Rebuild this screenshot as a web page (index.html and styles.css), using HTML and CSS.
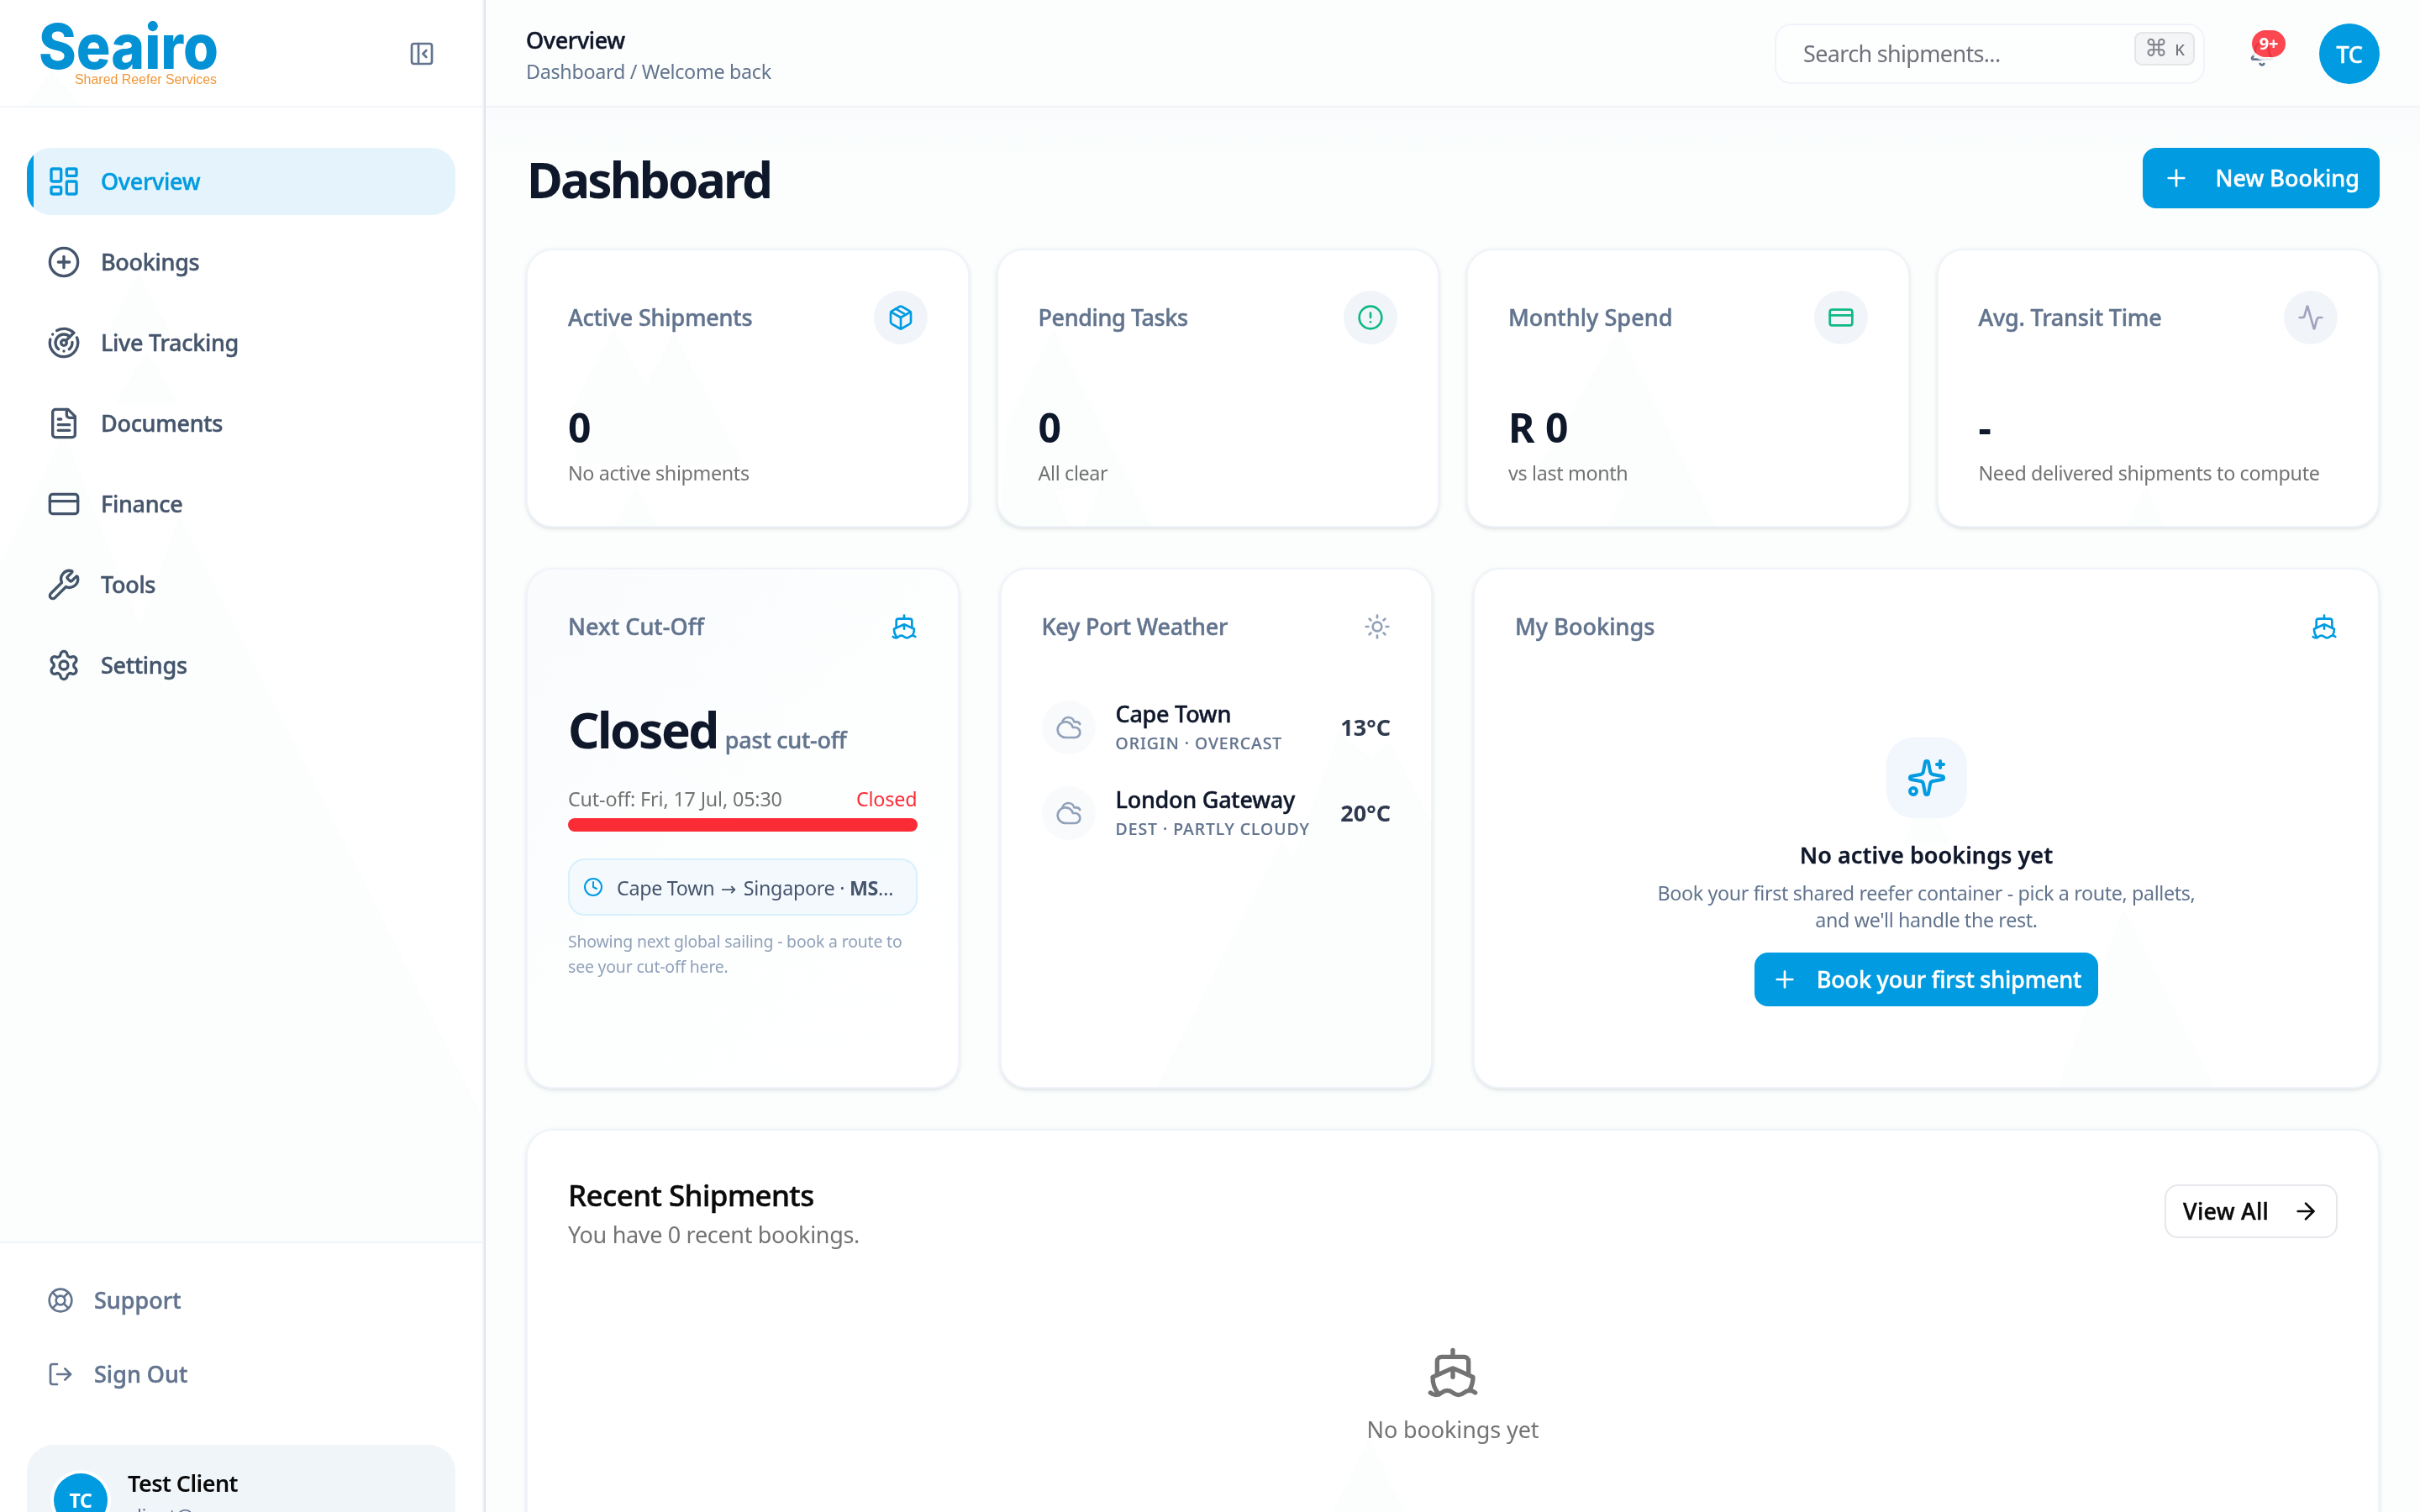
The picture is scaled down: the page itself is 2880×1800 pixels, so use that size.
FILE: index.html
```html
<!DOCTYPE html>
<html lang="en">
<head>
<meta charset="utf-8">
<title>Seairo Dashboard</title>
<link rel="stylesheet" href="styles.css">
</head>
<body>
<svg class="defs" aria-hidden="true">
  <symbol id="ship" viewBox="0 0 24 24"><path d="M12 10.189V14"/><path d="M12 2v3"/><path d="M19 13V7a2 2 0 0 0-2-2H7a2 2 0 0 0-2 2v6"/><path d="M19.38 20A11.6 11.6 0 0 0 21 14l-8.188-3.639a2 2 0 0 0-1.624 0L3 14a11.6 11.6 0 0 0 2.81 7.76"/><path d="M2 21c.6.5 1.2 1 2.5 1 2.5 0 2.5-2 5-2 1.3 0 1.9.5 2.5 1s1.2 1 2.5 1c2.5 0 2.5-2 5-2 1.3 0 1.9.5 2.5 1"/></symbol>
  <symbol id="card" viewBox="0 0 24 24"><rect width="20" height="14" x="2" y="5" rx="2"/><path d="M2 10h20"/></symbol>
  <symbol id="plus" viewBox="0 0 24 24"><path d="M5 12h14"/><path d="M12 5v14"/></symbol>
  <symbol id="cloudy" viewBox="0 0 24 24"><path d="M17.5 12a1 1 0 1 1 0 9H9.006a7 7 0 1 1 6.702-9z"/><path d="M21.832 9A3 3 0 0 0 19 7h-2.207a5.5 5.5 0 0 0-10.72.61"/></symbol>
</svg>

<div class="app">
  <aside class="sidebar">
    <div class="brand">
      <svg class="logo" width="212" height="84" viewBox="0 0 212 84" role="img" aria-label="Seairo Shared Reefer Services">
        <text class="logo-name" x="-2" y="61" textLength="214" lengthAdjust="spacingAndGlyphs">Seairo</text>
        <text class="logo-tag" x="41" y="79" textLength="169" lengthAdjust="spacingAndGlyphs">Shared Reefer Services</text>
      </svg>
      <svg class="ic s32 collapse" viewBox="0 0 24 24"><rect width="18" height="18" x="3" y="3" rx="2"/><path d="M9 3v18"/><path d="m16 15-3-3 3-3"/></svg>
    </div>
    <nav class="nav">
      <a class="item active"><svg class="ic s40" viewBox="0 0 24 24"><rect width="7" height="9" x="3" y="3" rx="1"/><rect width="7" height="5" x="14" y="3" rx="1"/><rect width="7" height="9" x="14" y="12" rx="1"/><rect width="7" height="5" x="3" y="16" rx="1"/></svg><span>Overview</span></a>
      <a class="item"><svg class="ic s40" viewBox="0 0 24 24"><circle cx="12" cy="12" r="10"/><path d="M8 12h8"/><path d="M12 8v8"/></svg><span>Bookings</span></a>
      <a class="item"><svg class="ic s40" viewBox="0 0 24 24"><path d="M19.07 4.93A10 10 0 0 0 6.99 3.34"/><path d="M4 6h.01"/><path d="M2.29 9.62A10 10 0 1 0 21.31 8.35"/><path d="M16.24 7.76A6 6 0 1 0 8.23 16.67"/><path d="M12 18h.01"/><path d="M17.99 11.66A6 6 0 0 1 15.77 16.67"/><circle cx="12" cy="12" r="2"/><path d="m13.41 10.59 5.66-5.66"/></svg><span>Live Tracking</span></a>
      <a class="item"><svg class="ic s40" viewBox="0 0 24 24"><path d="M15 2H6a2 2 0 0 0-2 2v16a2 2 0 0 0 2 2h12a2 2 0 0 0 2-2V7Z"/><path d="M14 2v4a2 2 0 0 0 2 2h4"/><path d="M10 9H8"/><path d="M16 13H8"/><path d="M16 17H8"/></svg><span>Documents</span></a>
      <a class="item"><svg class="ic s40"><use href="#card"/></svg><span>Finance</span></a>
      <a class="item"><svg class="ic s40" viewBox="0 0 24 24"><path d="M14.7 6.3a1 1 0 0 0 0 1.4l1.6 1.6a1 1 0 0 0 1.4 0l3.106-3.105c.32-.322.863-.22.983.218a6 6 0 0 1-8.259 7.057l-7.91 7.91a1 1 0 0 1-2.999-3l7.91-7.91a6 6 0 0 1 7.057-8.259c.438.12.54.662.219.984z"/></svg><span>Tools</span></a>
      <a class="item"><svg class="ic s40" viewBox="0 0 24 24"><path d="M9.671 4.136a2.34 2.34 0 0 1 4.659 0 2.34 2.34 0 0 0 3.319 1.915 2.34 2.34 0 0 1 2.33 4.033 2.34 2.34 0 0 0 0 3.831 2.34 2.34 0 0 1-2.33 4.033 2.34 2.34 0 0 0-3.319 1.915 2.34 2.34 0 0 1-4.659 0 2.34 2.34 0 0 0-3.32-1.915 2.34 2.34 0 0 1-2.33-4.033 2.34 2.34 0 0 0 0-3.831A2.34 2.34 0 0 1 6.35 6.051a2.34 2.34 0 0 0 3.319-1.915"/><circle cx="12" cy="12" r="3"/></svg><span>Settings</span></a>
    </nav>
    <div class="side-foot">
      <a class="foot-link"><svg class="ic s32" viewBox="0 0 24 24"><circle cx="12" cy="12" r="10"/><path d="m4.93 4.93 4.24 4.24"/><path d="m14.83 9.17 4.24-4.24"/><path d="m14.83 14.83 4.24 4.24"/><path d="m9.17 14.83-4.24 4.24"/><circle cx="12" cy="12" r="4"/></svg><span>Support</span></a>
      <a class="foot-link"><svg class="ic s32" viewBox="0 0 24 24"><path d="m16 17 5-5-5-5"/><path d="M21 12H9"/><path d="M9 21H5a2 2 0 0 1-2-2V5a2 2 0 0 1 2-2h4"/></svg><span>Sign Out</span></a>
      <div class="profile">
        <div class="avatar small">TC</div>
        <div><div class="p-name">Test Client</div><div class="p-mail">client@</div></div>
      </div>
    </div>
  </aside>

  <div class="main">
    <header class="topbar">
      <div class="crumbs">
        <div class="crumb-title">Overview</div>
        <div class="crumb-path">Dashboard / Welcome back</div>
      </div>
      <div class="top-right">
        <div class="search"><span>Search shipments...</span><kbd class="kbd"><span class="cmd">⌘</span><span>K</span></kbd></div>
        <div class="bell">
          <svg class="ic s32" viewBox="0 0 24 24"><path d="M10.268 21a2 2 0 0 0 3.464 0"/><path d="M3.262 15.326A1 1 0 0 0 4 17h16a1 1 0 0 0 .74-1.673C19.41 13.956 18 12.499 18 8A6 6 0 0 0 6 8c0 4.499-1.411 5.956-2.738 7.326"/></svg>
          <span class="badge">9+</span>
        </div>
        <div class="avatar">TC</div>
      </div>
    </header>

    <main class="content">
      <div class="page-head">
        <h1>Dashboard</h1>
        <button class="btn lg"><svg class="ic s32"><use href="#plus"/></svg><span>New Booking</span></button>
      </div>

      <section class="stats">
        <article class="card stat">
          <div class="stat-head"><h2 class="label">Active Shipments</h2><div class="bubble blue"><svg class="ic s32" viewBox="0 0 24 24"><path d="M11 21.73a2 2 0 0 0 2 0l7-4A2 2 0 0 0 21 16V8a2 2 0 0 0-1-1.73l-7-4a2 2 0 0 0-2 0l-7 4A2 2 0 0 0 3 8v8a2 2 0 0 0 1 1.73z"/><path d="M12 22V12"/><path d="M3.29 7 12 12l8.71-5"/><path d="m7.5 4.27 9 5.15"/></svg></div></div>
          <div class="value">0</div><div class="note">No active shipments</div>
        </article>
        <article class="card stat">
          <div class="stat-head"><h2 class="label tight">Pending Tasks</h2><div class="bubble green"><svg class="ic s32" viewBox="0 0 24 24"><circle cx="12" cy="12" r="10"/><path d="M12 8v4"/><path d="M12 16h.01"/></svg></div></div>
          <div class="value">0</div><div class="note">All clear</div>
        </article>
        <article class="card stat">
          <div class="stat-head"><h2 class="label wide">Monthly Spend</h2><div class="bubble green"><svg class="ic s32"><use href="#card"/></svg></div></div>
          <div class="value">R 0</div><div class="note">vs last month</div>
        </article>
        <article class="card stat">
          <div class="stat-head"><h2 class="label">Avg. Transit Time</h2><div class="bubble mute"><svg class="ic s32" viewBox="0 0 24 24"><path d="M22 12h-2.48a2 2 0 0 0-1.93 1.46l-2.35 8.36a.25.25 0 0 1-.48 0L9.24 2.18a.25.25 0 0 0-.48 0l-2.35 8.36A2 2 0 0 1 4.49 12H2"/></svg></div></div>
          <div class="value">-</div><div class="note">Need delivered shipments to compute</div>
        </article>
      </section>

      <section class="panels">
        <article class="card panel cutoff">
          <div class="panel-head"><h2 class="label wide">Next Cut-Off</h2><svg class="ic s32 c-blue"><use href="#ship"/></svg></div>
          <div class="closed"><span class="closed-big">Closed</span><span class="closed-sub">past cut-off</span></div>
          <div class="cut-row"><span class="cut-date">Cut-off: Fri, 17 Jul, 05:30</span><span class="cut-state">Closed</span></div>
          <div class="bar"></div>
          <div class="sailing"><svg class="ic s24 c-blue" viewBox="0 0 24 24"><circle cx="12" cy="12" r="10"/><path d="M12 6v6l4 2"/></svg><span class="route">Cape Town <span class="arrow">→</span> Singapore · <b>MS</b>…</span></div>
          <p class="hint">Showing next global sailing - book a route to<br>see your cut-off here.</p>
        </article>

        <article class="card panel">
          <div class="panel-head"><h2 class="label">Key Port Weather</h2><svg class="ic s32 c-slate" viewBox="0 0 24 24"><circle cx="12" cy="12" r="4"/><path d="M12 2v2"/><path d="M12 20v2"/><path d="m4.93 4.93 1.41 1.41"/><path d="m17.66 17.66 1.41 1.41"/><path d="M2 12h2"/><path d="M20 12h2"/><path d="m6.34 17.66-1.41 1.41"/><path d="m19.07 4.93-1.41 1.41"/></svg></div>
          <div class="ports">
            <div class="port"><div class="bubble pale"><svg class="ic s32"><use href="#cloudy"/></svg></div><div class="port-text"><div class="port-name">Cape Town</div><div class="port-sub">Origin · Overcast</div></div><div class="temp">13°C</div></div>
            <div class="port"><div class="bubble pale"><svg class="ic s32"><use href="#cloudy"/></svg></div><div class="port-text"><div class="port-name">London Gateway</div><div class="port-sub">Dest · Partly Cloudy</div></div><div class="temp">20°C</div></div>
          </div>
        </article>

        <article class="card panel span2">
          <div class="panel-head"><h2 class="label wide">My Bookings</h2><svg class="ic s32 c-blue"><use href="#ship"/></svg></div>
          <div class="empty">
            <div class="tile"><svg class="ic s48" viewBox="0 0 24 24"><path d="M11.017 2.814a1 1 0 0 1 1.966 0l1.051 5.558a2 2 0 0 0 1.594 1.594l5.558 1.051a1 1 0 0 1 0 1.966l-5.558 1.051a2 2 0 0 0-1.594 1.594l-1.051 5.558a1 1 0 0 1-1.966 0l-1.051-5.558a2 2 0 0 0-1.594-1.594l-5.558-1.051a1 1 0 0 1 0-1.966l5.558-1.051a2 2 0 0 0 1.594-1.594z"/><path d="M20 2v4"/><path d="M22 4h-4"/><circle cx="4" cy="20" r="2"/></svg></div>
            <h3>No active bookings yet</h3>
            <p>Book your first shared reefer container - pick a route, pallets,<br>and we'll handle the rest.</p>
            <button class="btn"><svg class="ic s32"><use href="#plus"/></svg><span>Book your first shipment</span></button>
          </div>
        </article>
      </section>

      <section class="card recent">
        <div class="recent-head">
          <div><h2>Recent Shipments</h2><p>You have 0 recent bookings.</p></div>
          <button class="btn outline"><span>View All</span><svg class="ic s32" viewBox="0 0 24 24"><path d="M5 12h14"/><path d="m12 5 7 7-7 7"/></svg></button>
        </div>
        <div class="recent-empty"><svg class="ic s64"><use href="#ship"/></svg><p>No bookings yet</p></div>
      </section>
    </main>
  </div>

  <svg class="peaks" width="2880" height="1800" viewBox="0 0 2880 1800" aria-hidden="true">
    <path d="M61 83 31 126H97ZM165 325 125 400H205ZM174 417 138 480H212ZM0 672 76 515 166 745 214 613 574 1330V1478H0Z"/>
    <path d="M731 390 769 460 802 395 884 552H686L681 485ZM756 577 731 626H782ZM1254 392 1198 505 1190 626H1274L1255 585 1310 573 1291 626H1371ZM1926 393 1831 557 1935 580 1912 626H2042ZM2554 578 2530 626H2576Z"/>
    <path d="M1376 1294 1525 1001 1539 1022 1594 870 1633 904 1654 883 1704 980V1294ZM2527 1081 2449 1294H2636ZM2278 974H2306L2322 1005H2265ZM1629 1713 1586 1800H1672Z"/>
  </svg>
</div>
</body>
</html>
```
FILE: styles.css
```css
* { box-sizing: border-box; margin: 0; padding: 0; }
html, body { height: 1800px; overflow: hidden; }
body {
  font-family: "Noto Sans", "Open Sans", sans-serif;
  font-size: 27px;
  letter-spacing: -0.3px;
  color: #0a0a0a;
  background: #fff;
}
button { font: inherit; letter-spacing: inherit; border: 0; }
.defs { display: none; }

.ic { fill: none; stroke: currentColor; stroke-width: 2; stroke-linecap: round; stroke-linejoin: round; flex: none; display: block; }
.s24 { width: 24px; height: 24px; }
.s32 { width: 32px; height: 32px; }
.s40 { width: 40px; height: 40px; }
.s48 { width: 48px; height: 48px; }
.s64 { width: 64px; height: 64px; }
.c-blue { color: #009be0; }
.c-slate { color: #90a1b9; }

/* Slightly heavier medium weight */
.item, .foot-link, .avatar, .crumb-title, .btn, .label, .closed-sub, .port-name, .port-sub, .recent h2 { -webkit-text-stroke: 0.45px currentColor; }

.app { display: grid; grid-template-columns: 578px 1fr; height: 1800px; overflow: hidden; position: relative; }
.peaks { position: absolute; left: 0; top: 0; pointer-events: none; fill: #fbfefd; mix-blend-mode: multiply; }

/* Sidebar */
.sidebar { display: grid; grid-template-rows: 128px 1350px auto; height: 1800px; overflow: hidden; border-right: 2px solid #e1e4ea; box-shadow: inset -2px 0 0 #f1f4f9; padding-right: 2px; }
.brand { display: flex; justify-content: space-between; align-items: center; padding: 0 56px 0 48px; border-bottom: 2px solid #f1f4f9; }
.collapse { color: #62748e; margin-top: 2px; }
.logo { overflow: visible; }
.logo-name { font: 800 74px Inter, sans-serif; fill: #0492d5; letter-spacing: 0; }
.logo-tag { font: 16px "Liberation Sans", sans-serif; fill: #f0983a; letter-spacing: 0; }
.nav { display: flex; flex-direction: column; gap: 16px; padding: 48px 32px 0; }
.item { display: flex; align-items: center; gap: 24px; height: 80px; padding: 0 24px; border-radius: 28px; color: #45556c; font-weight: 500; letter-spacing: -0.3px; overflow: hidden; }
.item span, .foot-link span { padding-bottom: 2px; }
.item.active { background: linear-gradient(90deg, #009be0 8px, #e5f4fc 8px); color: #009be0; }
.side-foot { border-top: 2px solid #f1f4f9; padding: 32px 32px 0; }
.foot-link { display: flex; align-items: center; gap: 24px; height: 72px; padding: 0 24px; margin-bottom: 16px; color: #62748e; font-weight: 500; letter-spacing: 0; }
.profile { display: flex; gap: 24px; height: 140px; padding: 26px 32px; border-radius: 32px; background: #f0f5fa; }
.foot-link + .profile { margin-top: 48px; }
.p-name { font-weight: 600; font-size: 27px; line-height: 40px; letter-spacing: -0.55px; }
.p-mail { font-size: 23.3px; line-height: 32px; margin-top: 3px; color: #62748e; }

.avatar { width: 72px; height: 72px; border-radius: 50%; background: #009be0; color: #fff; font-weight: 500; display: flex; align-items: center; justify-content: center; }
.avatar.small { width: 64px; height: 64px; margin-top: 8px; font-size: 23px; font-weight: 700; box-shadow: 0 0 0 4px #fff; -webkit-text-stroke: 0; }

/* Top bar */
.main { background: #fbfefd; }
.topbar { height: 128px; border-bottom: 2px solid #f0f3f9; display: flex; justify-content: space-between; padding: 28px 48px 0; background: #fcfefd; }
.crumb-title { font-weight: 500; letter-spacing: -0.35px; line-height: 40px; color: #0f172b; }
.crumb-path { font-size: 23.3px; line-height: 34px; color: #62748e; }
.top-right { display: flex; align-items: flex-start; }
.search { position: relative; width: 512px; height: 72px; border: 2px solid #f1f3fa; border-radius: 20px; padding-left: 32px; line-height: 67px; color: #71717b; letter-spacing: -0.67px; background: #fdfefe; }
.kbd { position: absolute; right: 10px; top: 8px; width: 72px; height: 40px; border: 2px solid #e4e5e7; border-radius: 9px; background: #f4f5f7; display: flex; align-items: center; justify-content: center; gap: 8px; font: 500 18.5px "Noto Sans", sans-serif; letter-spacing: 0; }
.cmd { font: 28px/32px "DejaVu Sans", sans-serif; color: #85858e; }
.bell { position: relative; width: 72px; height: 72px; margin: 0 32px; padding: 20px; color: #62748e; }
.badge { position: absolute; left: 24px; top: 8px; width: 40px; height: 32px; border-radius: 16px; background: rgba(251, 44, 54, 0.87); box-shadow: 0 0 0 4px rgba(252, 254, 253, 0.87); color: #fff; font-size: 20px; font-weight: 700; line-height: 31px; text-align: center; }

/* Content */
.content { padding: 48px 48px 0; background: linear-gradient(#fafbfd, #fbfefd 60px); }
.page-head { display: flex; justify-content: space-between; align-items: flex-start; height: 120px; }
h1 { font-size: 58.5px; line-height: 72px; padding: 1px 0 0 1px; font-weight: 700; letter-spacing: -2.85px; color: #0f172b; }
.btn { display: flex; align-items: center; gap: 22px; height: 64px; padding: 0 20px; border-radius: 16px; background: #009be0; color: #fff; font-weight: 500; letter-spacing: -0.4px; }
.btn span { padding-bottom: 1px; }
.btn.lg { height: 72px; gap: 31px; padding: 0 24px; letter-spacing: 0; }
.btn.outline { background: #fff; border: 2px solid #e5e7eb; color: #0a0a0a; gap: 28px; letter-spacing: 0.25px; }

.card { border: 2px solid #f0f3f9; border-radius: 32px; background: #fff; box-shadow: 0 2px 6px rgba(15, 23, 43, 0.08), 0 2px 4px -2px rgba(15, 23, 43, 0.12); padding: 48px; }
.label { font-size: 27px; font-weight: 500; color: #62748e; letter-spacing: -0.2px; padding-bottom: 1px; }
.label.wide { letter-spacing: 0.05px; }
.label.tight { letter-spacing: -0.4px; }

.stats { display: grid; grid-template-columns: repeat(4, 1fr); gap: 32px; }
.stat { height: 332px; }
.stat-head { display: flex; justify-content: space-between; align-items: center; }
.bubble { width: 64px; height: 64px; border-radius: 50%; background: #f1f5fa; display: flex; align-items: center; justify-content: center; flex: none; }
.blue { color: #009be0; }
.green { color: #10b981; }
.mute { color: #a3a3bf; }
.pale { background: #f8fafc; color: #90a1b9; }
.value { font-size: 48px; font-weight: 700; line-height: 64px; letter-spacing: 0; margin-top: 67px; color: #0f172b; }
.note { font-size: 23.3px; line-height: 32px; margin-top: 6px; color: #737373; letter-spacing: -0.35px; }

.panels { display: grid; grid-template-columns: repeat(4, 1fr); gap: 48px; margin-top: 48px; }
.panel { height: 620px; min-width: 0; }
.span2 { grid-column: span 2; }
.panel-head { display: flex; justify-content: space-between; align-items: center; height: 40px; }
.cutoff { background: linear-gradient(135deg, #fafbfd, #fdfefe 50%, #fff); }
.closed { display: flex; align-items: baseline; gap: 9px; height: 60px; line-height: 60px; margin-top: 72px; white-space: nowrap; }
.closed-big { font-size: 58.5px; font-weight: 700; letter-spacing: -2.5px; color: #0f172b; }
.closed-sub { font-weight: 500; color: #62748e; letter-spacing: -0.25px; }
.cut-row { display: flex; justify-content: space-between; font-size: 23.3px; line-height: 32px; margin-top: 37px; letter-spacing: -0.15px; }
.cut-date { color: #737373; }
.cut-state { color: #fb2c36; }
.bar { height: 16px; border-radius: 8px; background: #fb2c36; margin-top: 7px; }
.sailing { display: flex; align-items: center; gap: 16px; height: 68px; margin-top: 32px; padding: 0 16px; border: 2px solid #d7f0fd; border-radius: 20px; background: #f4f9fe; color: #45556c; font-size: 23.3px; white-space: nowrap; }
.route { padding-top: 1px; }
.arrow { font: 22px/22px "DejaVu Sans", sans-serif; display: inline-block; width: 21px; margin-left: 2px; letter-spacing: 0; }
.route b { font-weight: 700; }
.hint { font-size: 19.4px; line-height: 30px; margin-top: 16px; color: #90a1b9; letter-spacing: -0.16px; white-space: nowrap; }

.ports { display: flex; flex-direction: column; gap: 32px; margin-top: 65px; }
.port { display: flex; align-items: center; height: 70px; }
.port-text { flex: 1; padding-left: 24px; }
.port-name { font-weight: 500; line-height: 38px; color: #0f172b; letter-spacing: -0.25px; }
.port-sub { font-size: 19.4px; font-weight: 500; line-height: 32px; letter-spacing: 0.97px; text-transform: uppercase; color: #62748e; white-space: nowrap; -webkit-text-stroke-width: 0.2px; }
.temp { font-weight: 700; color: #2f3a50; letter-spacing: 0; padding-bottom: 1px; }

.empty { display: flex; flex-direction: column; align-items: center; text-align: center; margin-top: 112px; }
.tile { width: 96px; height: 96px; border-radius: 32px; background: #f1f7fd; color: #009be0; display: flex; align-items: center; justify-content: center; }
.empty h3 { font-size: 27px; font-weight: 600; line-height: 40px; margin-top: 24px; color: #0f172b; letter-spacing: 0.05px; -webkit-text-stroke: 0.3px currentColor; }
.empty p { font-size: 23.3px; line-height: 32px; margin-top: 9px; color: #62748e; letter-spacing: -0.37px; }
.empty .btn { margin-top: 23px; letter-spacing: -0.2px; }

.recent { height: 600px; margin-top: 48px; }
.recent-head { display: flex; justify-content: space-between; align-items: flex-start; }
.recent h2 { font-size: 35px; font-weight: 500; line-height: 48px; margin-top: 5px; letter-spacing: -0.58px; }
.recent-head p { line-height: 40px; margin-top: 3px; color: #737373; letter-spacing: -0.33px; }
.recent-head .btn { margin-top: 16px; }
.recent-empty { display: flex; flex-direction: column; align-items: center; margin-top: 112px; color: #737373; }
.recent-empty p { line-height: 40px; margin-top: 16px; letter-spacing: -0.1px; }
```
